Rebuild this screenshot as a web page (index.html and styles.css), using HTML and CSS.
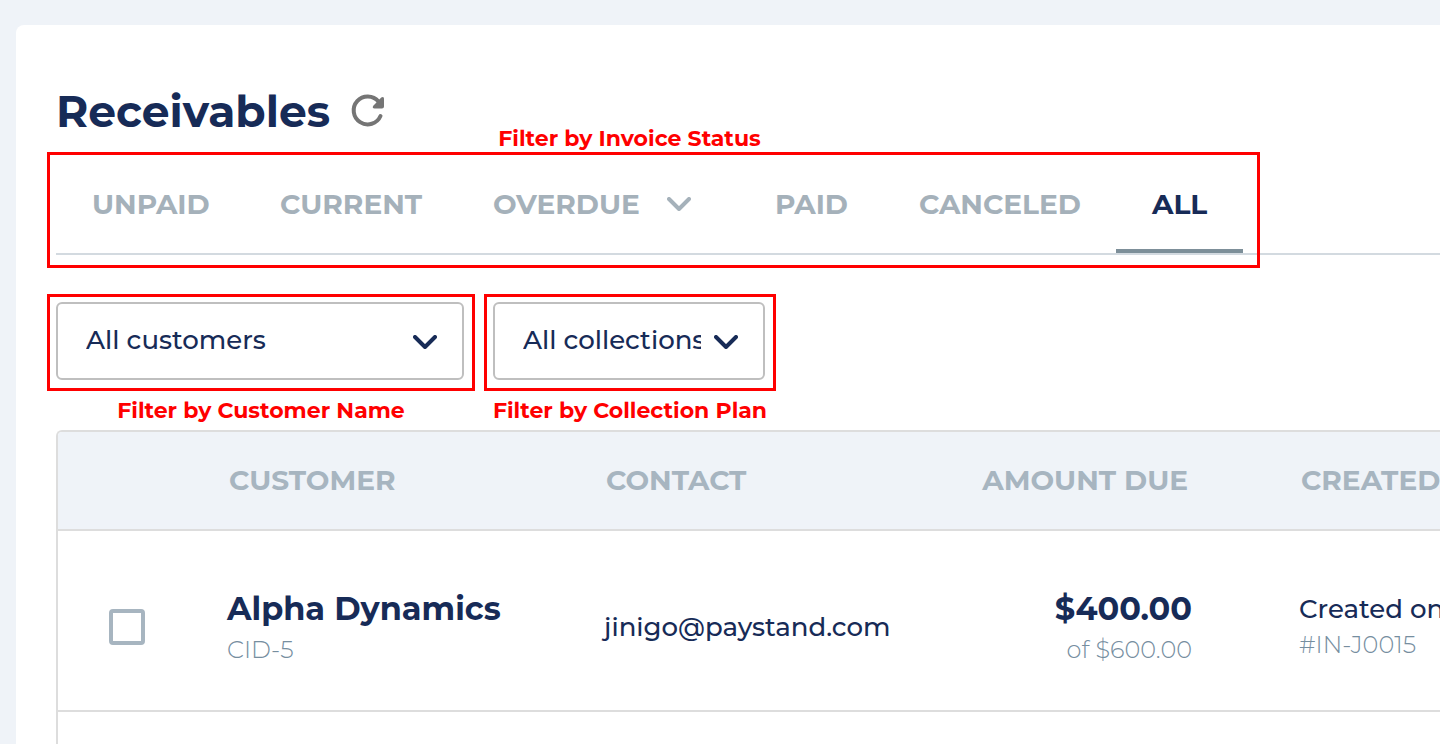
FILE: index.html
```html
<!DOCTYPE html>
<html lang="en">
<head>
<meta charset="utf-8">
<title>Receivables</title>
<link rel="stylesheet" href="styles.css">
</head>
<body>
<main class="card">
  <header class="heading">
    <h1 class="title">Receivables</h1>
    <button class="refresh" type="button" aria-label="Refresh">
      <svg class="refresh-icon" viewBox="0 0 36 36" aria-hidden="true">
        <path d="M30.500 23A14 14 0 1 1 28.500 8.500" fill="none" stroke="#757575" stroke-width="4" stroke-linecap="round"/>
        <path d="M31.200 4.400Q34 3 34 5.600V13.500Q34 15.500 32 15.500H24.500Q21.800 15.300 23.300 12.800Z" fill="#757575"/>
      </svg>
    </button>
  </header>

  <nav class="tabs" aria-label="Invoice status">
    <button class="tab tab-unpaid" type="button">UNPAID</button>
    <button class="tab tab-current" type="button">CURRENT</button>
    <button class="tab tab-overdue" type="button">OVERDUE
      <svg class="chevron" viewBox="0 0 24 14" aria-hidden="true"><path d="M2 2L12 12L22 2"/></svg>
    </button>
    <button class="tab tab-paid" type="button">PAID</button>
    <button class="tab tab-canceled" type="button">CANCELED</button>
    <button class="tab tab-all" type="button" aria-current="page">ALL</button>
    <div class="tabs-outline"><span class="note tabs-note">Filter by Invoice Status</span></div>
  </nav>

  <div class="filters">
    <div class="filter filter-customer">
      <div class="outline">
        <select class="select" id="customer"><option>All customers</option></select>
        <svg class="chevron select-chevron" viewBox="0 0 24 14" aria-hidden="true"><path d="M2 2L12 12L22 2"/></svg>
      </div>
      <label class="note" for="customer">Filter by Customer Name</label>
    </div>
    <div class="filter filter-collection">
      <div class="outline">
        <select class="select" id="collection"><option>All collections</option></select>
        <svg class="chevron select-chevron" viewBox="0 0 24 14" aria-hidden="true"><path d="M2 2L12 12L22 2"/></svg>
      </div>
      <label class="note" for="collection">Filter by Collection Plan</label>
    </div>
  </div>

  <div class="table-wrap">
    <table class="table">
      <colgroup><col class="col-check"><col class="col-customer"><col class="col-contact"><col class="col-amount"><col></colgroup>
      <thead>
        <tr><th></th><th>CUSTOMER</th><th>CONTACT</th><th class="amount">AMOUNT DUE</th><th class="created">CREATED</th></tr>
      </thead>
      <tbody>
        <tr>
          <td class="check"><input class="checkbox" type="checkbox" aria-label="Select Alpha Dynamics"></td>
          <td><div class="strong">Alpha Dynamics</div><div class="muted">CID-5</div></td>
          <td>jinigo@paystand.com</td>
          <td class="amount"><div class="strong">$400.00</div><div class="muted">of $600.00</div></td>
          <td class="created"><div class="line">Created on</div><div class="muted line">#IN-J0015</div></td>
        </tr>
      </tbody>
    </table>
  </div>
</main>
</body>
</html>
```
FILE: styles.css
```css
* { box-sizing: border-box; }

body {
  display: flex;
  flex-direction: column;
  margin: 0;
  height: 100vh;
  padding: 25px 0 0 16px;
  overflow: hidden;
  background: #eff3f8;
  color: #172b57;
  font-family: Montserrat, Inter, sans-serif;
  font-size: 26px;
  font-weight: 500;
}

button, select { font: inherit; color: inherit; }
button { border: 0; padding: 0; background: none; }

.card {
  display: flex;
  flex: 1;
  flex-direction: column;
  padding: 56px 0 0 40px;
  background: #fff;
  border-top-left-radius: 8px;
}

.heading { display: flex; align-items: center; gap: 20px; height: 60px; }
.title { margin: 0; font-size: 44px; font-weight: 700; }
.refresh { display: flex; }
.refresh-icon { width: 36px; height: 36px; }

.chevron { width: 24px; height: 14px; fill: none; stroke: currentColor; stroke-width: 4px; stroke-linecap: round; stroke-linejoin: round; }

.tabs { position: relative; display: flex; margin-top: 14px; height: 100px; border-bottom: 2px solid #d3dae0; }
.tab { display: flex; align-items: center; padding: 0 36px; color: #a5b1ba; font-size: 28px; font-weight: 700; }
.tab-unpaid { width: 188px; }
.tab-current { width: 213px; }
.tab-overdue { width: 282px; justify-content: space-between; padding-right: 48px; }
.tab-paid { width: 144px; }
.tab-canceled { width: 233px; }
.tab-all { width: 127px; padding-top: 4px; color: #172b57; border-bottom: 4px solid #7d8f99; }
.tabs-outline { position: absolute; top: -3px; bottom: -15px; left: -9px; width: 1213px; border: 3px solid #f00; pointer-events: none; }
.tabs-note { position: absolute; bottom: 100%; left: 0; right: 48px; padding-bottom: 2px; }

.note { color: #f00; font-size: 22px; font-weight: 700; line-height: 28px; text-align: center; white-space: nowrap; }

.filters { display: flex; gap: 9px; margin: 39px 0 0 -9px; }
.filter { display: flex; flex-direction: column; gap: 6px; }
.filter-customer { width: 428px; }
.filter-collection { width: 292px; }
.outline { position: relative; padding: 5px 8px 8px 6px; border: 3px solid #f00; }
.select {
  display: block;
  width: 100%;
  height: 78px;
  padding: 0 62px 2px 28px;
  appearance: none;
  background: #fff;
  border: 2px solid #bfbfbf;
  border-radius: 6px;
  text-overflow: clip;
}
.select-chevron { position: absolute; right: 35px; top: 38px; pointer-events: none; }

.table-wrap { flex: 1; margin-top: 5px; border: 2px solid #ddd; border-width: 2px 0 0 2px; border-top-left-radius: 6px; overflow: hidden; }
.table { width: 100%; table-layout: fixed; border-collapse: separate; border-spacing: 0; }
.col-check { width: 169px; }
.col-customer { width: 377px; }
.col-contact { width: 330px; }
.col-amount { width: 258px; }
.table th { height: 99px; padding: 0 0 2px 2px; background: #eff3f8; border-bottom: 2px solid #ddd; color: #a7b5c0; font-size: 28px; font-weight: 700; text-align: left; white-space: nowrap; }
.table td { height: 181px; padding: 12px 0 0; border-bottom: 2px solid #ddd; white-space: nowrap; vertical-align: middle; }
.table .check { padding-left: 51px; }
.table .amount { text-align: right; }
.table th.amount { padding-right: 4px; }
.table td.created { padding-left: 107px; }
.table th.created { padding-left: 109px; }
.strong { padding-top: 2px; font-size: 32px; font-weight: 700; line-height: 44px; }
.muted { color: #768e9f; font-size: 24px; font-weight: 300; line-height: 38px; }
.line { line-height: 36px; }
.checkbox { display: block; width: 36px; height: 36px; margin: 0; appearance: none; border: 4px solid #a7b5c0; border-radius: 4px; }
```
